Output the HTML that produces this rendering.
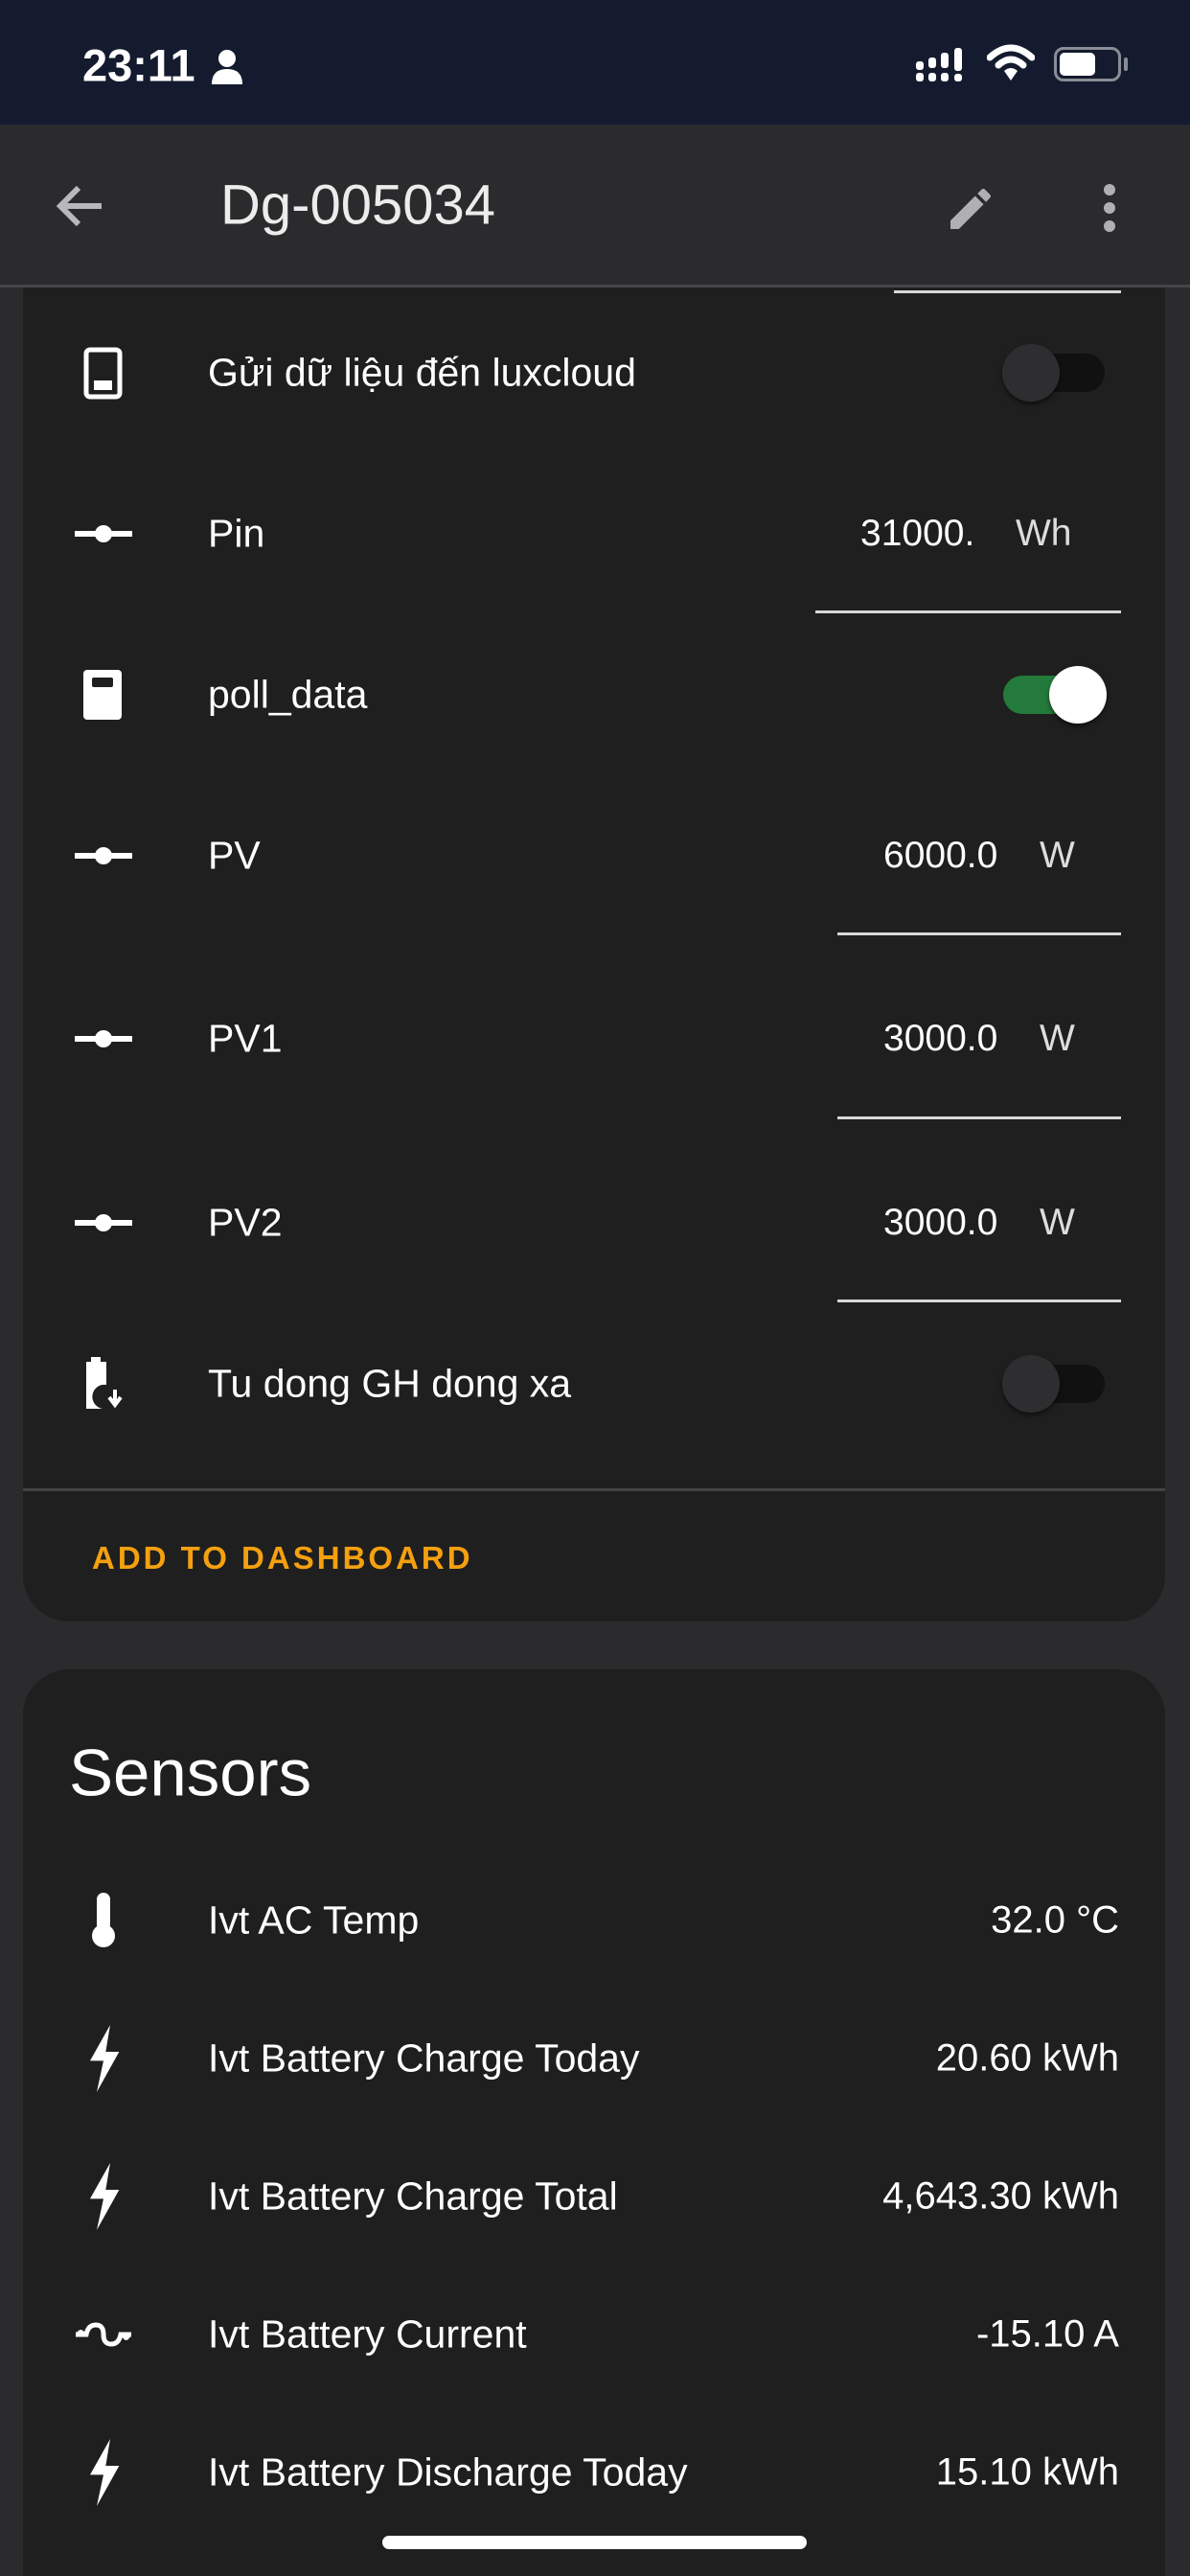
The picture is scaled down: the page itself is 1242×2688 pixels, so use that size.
<!DOCTYPE html>
<html style="width:1242px;height:2688px;overflow:hidden"><head><meta charset="utf-8"><style>
*{margin:0;padding:0;box-sizing:border-box}
body{width:1242px;height:2688px;background:#2b2b2d;font-family:"Liberation Sans",sans-serif;color:#fff;position:relative;overflow:hidden}
.abs{position:absolute}
.sb{left:0;top:0;width:1242px;height:130px;background:#141b2f}
.ab{left:0;top:130px;width:1242px;height:168px;background:#2b2b2d}
.card{left:24px;width:1192px;background:#1f1f1f;border-radius:48px}
.lbl{left:217px;font-size:41px;transform:translateY(-50%);white-space:nowrap}
.ic{left:78px;width:60px;height:60px;transform:translateY(-50%)}
.bolt{left:73px;width:70px;height:70px;transform:translateY(-50%)}
.ul{height:3px;background:#d8d8d8}
.val{font-size:39px;transform:translateY(-50%);white-space:nowrap}
.tr{left:1047px;width:106px;height:40px;border-radius:20px;transform:translateY(-50%)}
.th{width:60px;height:60px;border-radius:50%;transform:translate(-50%,-50%);box-shadow:0 3px 5px rgba(0,0,0,.5)}
.rv{right:74px;font-size:40px;transform:translateY(-50%);white-space:nowrap}
</style></head><body>
<div class="abs sb"></div>
<div class="abs" style="left:86px;top:68px;transform:translateY(-50%);font-size:47px;font-weight:bold">23:11</div>
<svg class="abs" style="left:220px;top:50px" width="34" height="38" viewBox="0 0 34 38"><circle cx="17" cy="11" r="9" fill="#fff"/><path d="M1 38 Q1 22 17 22 Q33 22 33 38Z" fill="#fff"/></svg>
<svg class="abs" style="left:956px;top:50px" width="54" height="36" viewBox="0 0 54 36"><g fill="#fff"><rect x="0" y="14" width="8" height="9" rx="3"/><rect x="0" y="26" width="8" height="9" rx="3"/><rect x="13" y="10" width="8" height="11" rx="3"/><rect x="13" y="26" width="8" height="9" rx="3"/><rect x="26" y="5" width="8" height="16" rx="3"/><rect x="26" y="26" width="8" height="9" rx="3"/><rect x="40" y="0" width="8" height="24" rx="3"/><rect x="40" y="27" width="8" height="8" rx="3"/></g></svg>
<svg class="abs" style="left:1030px;top:46px" width="50" height="40" viewBox="0 0 50 40"><path d="M3 14 Q25 -6 47 14" stroke="#fff" stroke-width="7" fill="none" stroke-linecap="round"/><path d="M12 22 Q25 10 38 22" stroke="#fff" stroke-width="7" fill="none" stroke-linecap="round"/><path d="M18 28 L25 38 L32 28 Q25 22 18 28Z" fill="#fff"/></svg>
<div class="abs" style="left:1100px;top:49px;width:70px;height:36px;border:3px solid #8a8d95;border-radius:10px"></div>
<div class="abs" style="left:1106px;top:55px;width:37px;height:24px;background:#fff;border-radius:5px"></div>
<div class="abs" style="left:1173px;top:60px;width:4px;height:14px;background:#8a8d95;border-radius:2px"></div>

<div class="abs ab"></div>
<svg class="abs" style="left:56px;top:190px" width="56" height="50" viewBox="0 0 56 50"><path d="M50 25 H8 M26 6 L7 25 L26 44" stroke="#b8b8bc" stroke-width="6" fill="none"/></svg>
<div class="abs" style="left:230px;top:214px;transform:translateY(-50%);font-size:58px;color:#ececec">Dg-005034</div>
<svg class="abs" style="left:985px;top:190px" width="56" height="56" viewBox="0 0 24 24"><path fill="#b0b0b4" d="M3 17.25V21h3.75L17.81 9.940l-3.75-3.75L3 17.25zM20.71 7.04a1 1 0 000-1.41l-2.34-2.34a1 1 0 00-1.41 0l-1.830 1.83 3.75 3.75 1.83-1.83z"/></svg>
<svg class="abs" style="left:1146px;top:190px" width="24" height="56"><circle cx="12" cy="8" r="6" fill="#b0b0b4"/><circle cx="12" cy="27" r="6" fill="#b0b0b4"/><circle cx="12" cy="46" r="6" fill="#b0b0b4"/></svg>

<div class="abs card" style="top:298px;height:1394px;border-top-left-radius:0;border-top-right-radius:0"></div>
<div class="abs" style="left:0;top:297px;width:1242px;height:3px;background:#464648"></div>
<div class="abs ul" style="left:933px;top:303px;width:237px"></div>

<svg class="abs ic" style="top:389px" viewBox="0 0 60 60"><rect x="12" y="6" width="35" height="49" rx="4" stroke="#fff" stroke-width="5" fill="none"/><rect x="20" y="38" width="19" height="10" fill="#fff"/></svg>
<div class="abs lbl" style="top:389px">Gửi dữ liệu đến luxcloud</div>
<div class="abs tr" style="top:389px;background:#111"></div><div class="abs th" style="left:1076px;top:389px;background:#2e2e30"></div>

<svg class="abs ic" style="top:557px" viewBox="0 0 60 60"><rect x="0" y="27" width="60" height="6" fill="#fff"/><circle cx="30" cy="30" r="9" fill="#fff"/></svg>
<div class="abs lbl" style="top:557px">Pin</div>
<div class="abs val" style="left:898px;top:557px">31000.</div><div class="abs val" style="left:1060px;top:557px;color:#ddd">Wh</div>
<div class="abs ul" style="left:851px;top:637px;width:319px"></div>

<svg class="abs ic" style="top:725px" viewBox="0 0 60 60"><rect x="9" y="4" width="40" height="52" rx="4" fill="#fff"/><rect x="18" y="12" width="22" height="10" rx="2" fill="#1f1f1f"/></svg>
<div class="abs lbl" style="top:725px">poll_data</div>
<div class="abs tr" style="top:725px;background:#237a3b"></div><div class="abs th" style="left:1125px;top:725px;background:#fff"></div>

<svg class="abs ic" style="top:893px" viewBox="0 0 60 60"><rect x="0" y="27" width="60" height="6" fill="#fff"/><circle cx="30" cy="30" r="9" fill="#fff"/></svg>
<div class="abs lbl" style="top:893px">PV</div>
<div class="abs val" style="left:922px;top:893px;width:128px;overflow:hidden">6000.0</div><div class="abs val" style="left:1085px;top:893px;color:#ddd">W</div>
<div class="abs ul" style="left:874px;top:973px;width:296px"></div>

<svg class="abs ic" style="top:1084px" viewBox="0 0 60 60"><rect x="0" y="27" width="60" height="6" fill="#fff"/><circle cx="30" cy="30" r="9" fill="#fff"/></svg>
<div class="abs lbl" style="top:1084px">PV1</div>
<div class="abs val" style="left:922px;top:1084px;width:128px;overflow:hidden">3000.0</div><div class="abs val" style="left:1085px;top:1084px;color:#ddd">W</div>
<div class="abs ul" style="left:874px;top:1165px;width:296px"></div>

<svg class="abs ic" style="top:1276px" viewBox="0 0 60 60"><rect x="0" y="27" width="60" height="6" fill="#fff"/><circle cx="30" cy="30" r="9" fill="#fff"/></svg>
<div class="abs lbl" style="top:1276px">PV2</div>
<div class="abs val" style="left:922px;top:1276px;width:128px;overflow:hidden">3000.0</div><div class="abs val" style="left:1085px;top:1276px;color:#ddd">W</div>
<div class="abs ul" style="left:874px;top:1356px;width:296px"></div>

<svg class="abs ic" style="top:1444px" viewBox="0 0 60 60"><path d="M17 2h10v5h6v24a12 12 0 0 0 -4 25H12V7h5z" fill="#fff"/><path d="M42 36v14M36 44l6 8 6-8" stroke="#fff" stroke-width="4" fill="none"/></svg>
<div class="abs lbl" style="top:1444px">Tu dong GH dong xa</div>
<div class="abs tr" style="top:1444px;background:#111"></div><div class="abs th" style="left:1076px;top:1444px;background:#2e2e30"></div>

<div class="abs" style="left:24px;top:1553px;width:1192px;height:3px;background:#434345"></div>
<div class="abs" style="left:96px;top:1626px;transform:translateY(-50%);font-size:33px;font-weight:bold;color:#f5a00f;letter-spacing:3px">ADD TO DASHBOARD</div>

<div class="abs card" style="top:1742px;height:946px;border-bottom-left-radius:0;border-bottom-right-radius:0"></div>
<div class="abs" style="left:72px;top:1850px;transform:translateY(-50%);font-size:69px">Sensors</div>

<svg class="abs ic" style="top:2004px" viewBox="0 0 60 60"><rect x="23" y="1" width="14" height="40" rx="7" fill="#fff"/><circle cx="30" cy="46" r="12" fill="#fff"/></svg>
<div class="abs lbl" style="top:2004px">Ivt AC Temp</div><div class="abs rv" style="top:2004px">32.0 °C</div>

<svg class="abs bolt" style="top:2148px" viewBox="0 0 60 60"><path d="M36 0 L18 32 H30 L24 60 L44 24 H32 Z" fill="#fff"/></svg>
<div class="abs lbl" style="top:2148px">Ivt Battery Charge Today</div><div class="abs rv" style="top:2148px">20.60 kWh</div>

<svg class="abs bolt" style="top:2292px" viewBox="0 0 60 60"><path d="M36 0 L18 32 H30 L24 60 L44 24 H32 Z" fill="#fff"/></svg>
<div class="abs lbl" style="top:2292px">Ivt Battery Charge Total</div><div class="abs rv" style="top:2292px">4,643.30 kWh</div>

<svg class="abs ic" style="top:2436px" viewBox="0 0 60 60"><path d="M1 30 H12 Q14 20 22 20 Q30 20 30 30 Q30 40 38 40 Q46 40 48 30 H59" stroke="#fff" stroke-width="5" fill="none"/><path d="M1 30 Q6 20 12 30Z M48 30 Q54 42 59 30Z" fill="#fff"/></svg>
<div class="abs lbl" style="top:2436px">Ivt Battery Current</div><div class="abs rv" style="top:2436px">-15.10 A</div>

<svg class="abs bolt" style="top:2580px" viewBox="0 0 60 60"><path d="M36 0 L18 32 H30 L24 60 L44 24 H32 Z" fill="#fff"/></svg>
<div class="abs lbl" style="top:2580px">Ivt Battery Discharge Today</div><div class="abs rv" style="top:2580px">15.10 kWh</div>

<div class="abs" style="left:399px;top:2646px;width:443px;height:14px;border-radius:7px;background:#fff"></div>
</body></html>
